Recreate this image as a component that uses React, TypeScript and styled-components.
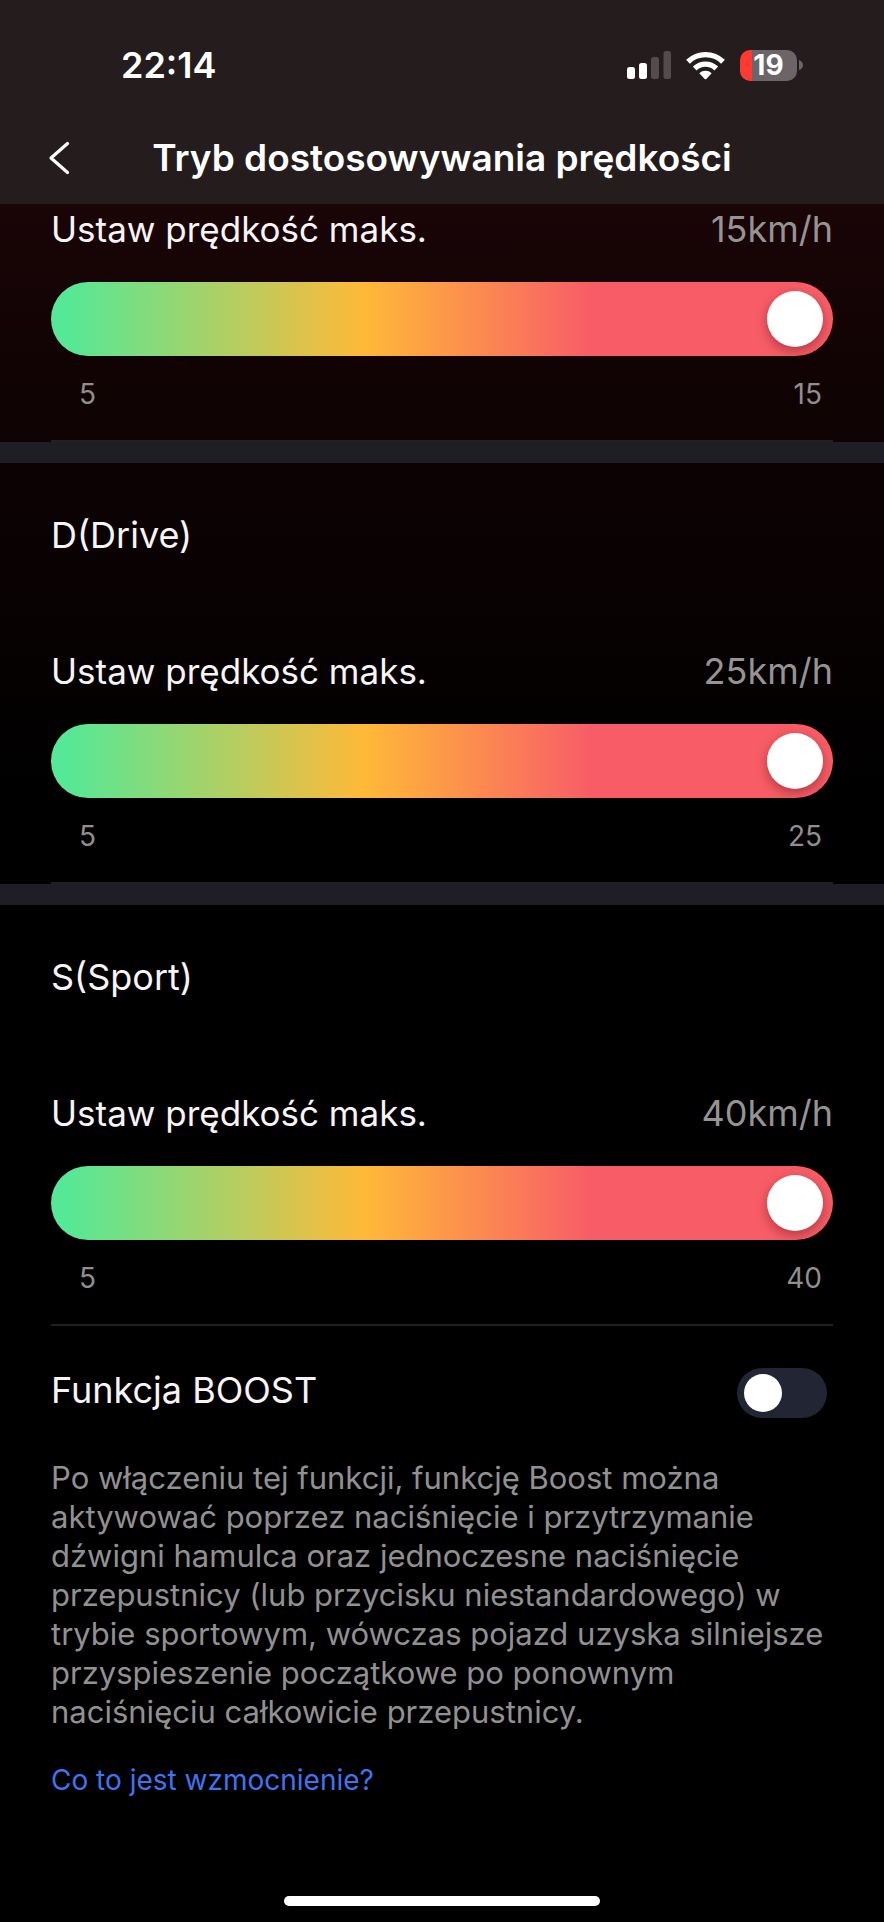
import React, { useId, useState } from "react";
import styled, { createGlobalStyle } from "styled-components";

const GlobalStyle = createGlobalStyle`
  *, *::before, *::after { box-sizing: border-box; }
  body {
    margin: 0;
    background: #000;
    color: #f8f4f4;
    font-family: Inter, Roboto, "Liberation Sans", sans-serif;
  }
  h1, h2, p { margin: 0; font-weight: 400; }
`;

const Screen = styled.div`
  display: flex;
  flex-direction: column;
  min-height: 100vh;
  background: linear-gradient(#1a0507 200px, #120304 340px, #0c0203 500px, #000 800px);
`;

const Header = styled.header`
  display: flex;
  flex-direction: column;
  padding-top: 43px;
  background: #241c1d;
`;

const StatusBar = styled.div`
  display: flex;
  justify-content: space-between;
  align-items: center;
  height: 44px;
  padding: 0 81px 0 121px;
`;

const Clock = styled.time`
  font-size: 36px;
  font-weight: 600;
  line-height: 44px;
  color: #fff;
`;

const StatusIcons = styled.div`
  display: flex;
  align-items: center;
  gap: 15px;

  svg { display: block; }
`;

const Battery = styled.div`
  display: flex;
  align-items: center;
  gap: 2px;
`;

const BatteryBody = styled.div`
  display: flex;
  align-items: center;
  justify-content: center;
  width: 57px;
  height: 31px;
  border-radius: 10px;
  background: linear-gradient(to right, #ff3a30 12px, #6b6567 12px);
  color: #fff;
  font-size: 28px;
  font-weight: 700;
  line-height: 31px;
`;

const TitleBar = styled.div`
  display: grid;
  grid-template-columns: 100px 1fr 100px;
  align-items: center;
  height: 117px;
  padding-top: 25px;
`;

const BackButton = styled.button`
  display: flex;
  align-items: center;
  justify-content: flex-start;
  height: 60px;
  padding: 0 0 0 48px;
  border: 0;
  background: none;
  color: #fff;
  cursor: pointer;
`;

const Title = styled.h1`
  font-size: 37px;
  font-weight: 600;
  line-height: 44px;
  text-align: center;
  white-space: nowrap;
  color: #fff;
`;

const Main = styled.main`
  display: flex;
  flex-direction: column;
  padding-top: 3px;
`;

const Section = styled.section`
  display: flex;
  flex-direction: column;
  padding: 0 51px;
`;

const Band = styled.div`
  height: 21px;
  margin-bottom: 50px;
  background: #1f1e24;
`;

const ModeName = styled.h2`
  margin-bottom: 92px;
  font-size: 36px;
  line-height: 44px;
`;

const SettingRow = styled.div`
  display: flex;
  justify-content: space-between;
  align-items: flex-start;
  font-size: 36px;
  line-height: 44px;
`;

const SpeedLabel = styled.label`
  font-size: 35px;
`;

const SpeedValue = styled.output`
  color: #979393;
`;

const Slider = styled.input`
  appearance: none;
  width: 100%;
  height: 74px;
  margin: 31px 0 21px;
  padding: 0 10px;
  border-radius: 37px;
  background: linear-gradient(to right, #55e896 2%, #ffb938 40%, #f85d67 69%);
  cursor: pointer;

  &::-webkit-slider-thumb {
    appearance: none;
    width: 56px;
    height: 56px;
    border-radius: 50%;
    background: #fff;
    box-shadow: 0 4px 12px rgba(70, 0, 10, 0.4);
  }
`;

const Scale = styled.div`
  display: flex;
  justify-content: space-between;
  padding: 0 11px 0 28px;
  margin-bottom: 29px;
  font-size: 28px;
  line-height: 34px;
  color: #928e8e;
`;

const Divider = styled.hr`
  width: 100%;
  height: 2px;
  margin: 0;
  border: 0;
  background: #222022;
`;

const Boost = styled.section`
  display: flex;
  flex-direction: column;
  align-items: flex-start;
  padding: 42px 51px 60px;

  ${SettingRow} {
    width: 100%;
    padding-right: 6px;
  }
`;

const Switch = styled.input`
  appearance: none;
  display: flex;
  align-items: center;
  width: 90px;
  height: 50px;
  margin: 0;
  padding: 0 7px;
  border-radius: 25px;
  background: #222533;
  cursor: pointer;

  &::before {
    content: "";
    width: 38px;
    height: 38px;
    border-radius: 50%;
    background: #fff;
  }

  &:checked {
    justify-content: flex-end;
    background: #3478f6;
  }
`;

const Description = styled.p`
  margin-top: 40px;
  font-size: 31px;
  line-height: 39px;
  color: #919191;
`;

const HelpLink = styled.a`
  margin-top: 32px;
  font-size: 28px;
  line-height: 34px;
  color: #3f74f0;
  text-decoration: none;
`;

const HomeArea = styled.footer`
  display: flex;
  justify-content: center;
  margin-top: auto;
  padding-bottom: 16px;
`;

const HomeIndicator = styled.div`
  width: 316px;
  height: 10px;
  border-radius: 5px;
  background: #fff;
`;

function SignalIcon() {
  return (
    <svg width="44" height="28" viewBox="0 0 44 28" fill="#fff" aria-hidden="true">
      <rect x="0" y="16" width="8" height="12" rx="2.5" />
      <rect x="12" y="12" width="8" height="16" rx="2.5" />
      <rect x="24" y="6" width="8" height="22" rx="2.5" fill="#544b4d" />
      <rect x="36.500" y="0" width="7.500" height="28" rx="2.5" fill="#544b4d" />
    </svg>
  );
}

function WifiIcon() {
  return (
    <svg width="39" height="29" viewBox="0 0 39 29" aria-hidden="true">
      <g fill="none" stroke="#fff" strokeWidth="5.4">
        <path d="M2 10.800 A25 25 0 0 1 37 10.800" />
        <path d="M8.700 17.500 A15.500 15.500 0 0 1 30.300 17.500" />
      </g>
      <path d="M13.300 22.300 A9 9 0 0 1 25.700 22.300 L20.300 27.900 Q19.500 28.700 18.700 27.900 Z" fill="#fff" />
    </svg>
  );
}

type SpeedSettingProps = { min: number; max: number };

function SpeedSetting({ min, max }: SpeedSettingProps) {
  const id = useId();
  const [speed, setSpeed] = useState(max);
  return (
    <>
      <SettingRow>
        <SpeedLabel htmlFor={id}>Ustaw prędkość maks.</SpeedLabel>
        <SpeedValue htmlFor={id}>{speed}km/h</SpeedValue>
      </SettingRow>
      <Slider
        id={id}
        type="range"
        min={min}
        max={max}
        value={speed}
        onChange={(e) => setSpeed(Number(e.target.value))}
      />
      <Scale>
        <span>{min}</span>
        <span>{max}</span>
      </Scale>
      <Divider />
    </>
  );
}

export default function App() {
  const [boost, setBoost] = useState(false);
  return (
    <Screen>
      <GlobalStyle />
      <Header>
        <StatusBar>
          <Clock>22:14</Clock>
          <StatusIcons>
            <SignalIcon />
            <WifiIcon />
            <Battery>
              <BatteryBody>19</BatteryBody>
              <svg width="4" height="10" viewBox="0 0 4 10" aria-hidden="true">
                <path d="M0 0 Q4 1.500 4 5 T0 10 Z" fill="#6b6567" />
              </svg>
            </Battery>
          </StatusIcons>
        </StatusBar>
        <TitleBar>
          <BackButton aria-label="Wstecz">
            <svg width="22" height="34" viewBox="0 0 22 34" aria-hidden="true">
              <path
                d="M19.500 2.500 L3 17 L19.500 31.500"
                fill="none"
                stroke="currentColor"
                strokeWidth="3.2"
                strokeLinecap="round"
                strokeLinejoin="round"
              />
            </svg>
          </BackButton>
          <Title>Tryb dostosowywania prędkości</Title>
        </TitleBar>
      </Header>
      <Main>
        <Section>
          <SpeedSetting min={5} max={15} />
        </Section>
        <Band />
        <Section>
          <ModeName>D(Drive)</ModeName>
          <SpeedSetting min={5} max={25} />
        </Section>
        <Band />
        <Section>
          <ModeName>S(Sport)</ModeName>
          <SpeedSetting min={5} max={40} />
        </Section>
        <Boost>
          <SettingRow>
            <label htmlFor="boost">Funkcja BOOST</label>
            <Switch
              id="boost"
              type="checkbox"
              role="switch"
              checked={boost}
              onChange={(e) => setBoost(e.target.checked)}
            />
          </SettingRow>
          <Description>
            Po włączeniu tej funkcji, funkcję Boost można aktywować poprzez naciśnięcie i
            przytrzymanie dźwigni hamulca oraz jednoczesne naciśnięcie przepustnicy (lub
            przycisku niestandardowego) w trybie sportowym, wówczas pojazd uzyska silniejsze
            przyspieszenie początkowe po ponownym naciśnięciu całkowicie przepustnicy.
          </Description>
          <HelpLink href="#boost">Co to jest wzmocnienie?</HelpLink>
        </Boost>
      </Main>
      <HomeArea>
        <HomeIndicator />
      </HomeArea>
    </Screen>
  );
}
